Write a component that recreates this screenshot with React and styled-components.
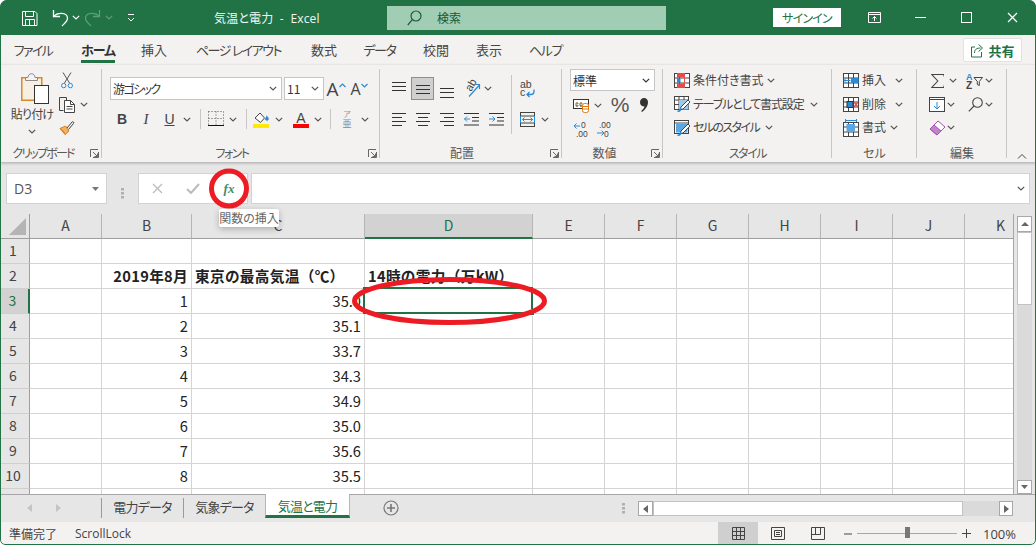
import React from "react";
import styled, { createGlobalStyle } from "styled-components";

const G = "#217346";
const INK = "#444";
const BLUE = "#2B8AD3";
const UI = `"Open Sans","Noto Sans CJK JP",sans-serif`;
const CJK = `"Noto Sans CJK JP","Noto Sans",sans-serif`;

const Global = createGlobalStyle`
  html, body { margin: 0; padding: 0; background: #fff; }
  #root { width: 1036px; height: 545px; }
  * { box-sizing: border-box; }
`;

const Window = styled.div`
  position: relative; width: 1036px; height: 545px; overflow: hidden;
  display: flex; flex-direction: column;
  background: #f3f2f1; font-family: ${UI}; font-feature-settings: "palt";
  color: ${INK}; font-size: 12px;
  border-radius: 7px 7px 5px 5px;
  &::after {
    content: ""; position: absolute; inset: 0; pointer-events: none; z-index: 9;
    border: 1px solid ${G}; border-radius: 7px 7px 5px 5px;
  }
`;

/* ---------- title bar ---------- */
const TitleBar = styled.div`
  flex: none; height: 35px; display: flex; align-items: center; background: ${G}; color: #fff;
`;
const Qat = styled.div`width: 214px; display: flex; align-items: center; padding-left: 22px;`;
const Tool = styled.div`
  flex: none; width: ${p => p.$w}px; height: ${p => p.$h || 24}px;
  display: flex; align-items: center; justify-content: center;
  svg { flex: none; }
`;
const DocTitle = styled.div`width: 173px; font-size: 12px; color: #f2f7f4; white-space: pre; letter-spacing: .15px;`;
const Search = styled.div`
  width: 279px; height: 24px; background: #a0cdb4; color: #155a36; font-size: 12px;
  display: flex; align-items: center; gap: 15px; padding-left: 20px;
`;
const SignIn = styled.div`
  margin-left: 107px; width: 68px; height: 19px; background: #fff; color: ${G};
  font-size: 12px; letter-spacing: -.8px; display: flex; align-items: center; justify-content: center;
`;
const WinButtons = styled.div`margin-left: 10px; display: flex;`;

/* ---------- tabs ---------- */
const TabRow = styled.div`flex: none; height: 30px; display: flex; padding-left: 4px; background: #f3f2f1;`;
const Tab = styled.div`
  flex: none; width: ${p => p.$w}px; display: flex; justify-content: center; font-size: 13px; color: #484644;
  padding-top: 6px;
`;
const TabLabel = styled.span`
  height: 22px; line-height: 18px; font-weight: ${p => p.$active ? 700 : 400};
  border-bottom: 3px solid ${p => p.$active ? G : "transparent"}; color: ${p => p.$active ? "#333" : "inherit"};
  letter-spacing: ${p => p.$ls || 0}px; white-space: pre;
`;
const Share = styled.div`
  margin: 3px 14px 0 auto; width: 59px; height: 24px; background: #fff; border: 1px solid #e3e2e1; border-radius: 2px;
  color: ${G}; font-weight: 700; font-size: 13px; display: flex; align-items: center; justify-content: center; gap: 3px;
`;

/* ---------- ribbon ---------- */
const Ribbon = styled.div`
  flex: none; height: 97px; display: flex; padding-top: 4px; background: #f3f2f1; position: relative; z-index: 2;
  box-shadow: 0 1px 3px rgba(0,0,0,.28);
`;
const Group = styled.div`
  flex: none; width: ${p => p.$w}px; height: 93px; position: relative; display: flex; flex-direction: column;
  &::after { content: ""; position: absolute; right: 0; top: 0; bottom: 4px; width: 1px; background: #c8c6c4; }
`;
const Body = styled.div`
  height: 77px; display: flex; padding-left: ${p => p.$pad || 0}px;
  flex-direction: ${p => p.$col ? "column" : "row"};
`;
const GroupLabel = styled.div`
  height: 16px; position: relative; text-align: center; font-size: 12px; line-height: 16px; color: #5a5856; white-space: nowrap;
  padding-right: ${p => p.$shift || 0}px; letter-spacing: ${p => p.$ls || 0}px;
`;
const Launcher = styled.span`position: absolute; right: 3px; top: 3px; display: flex;`;
const Row = styled.div`
  display: flex; align-items: center; height: ${p => p.$h}px; margin-top: ${p => p.$mt || 0}px; flex: none;
`;
const PasteCol = styled.div`
  flex: none; width: 54px; margin-left: 5px; padding-top: 3px; display: flex; flex-direction: column; align-items: center;
  font-size: 12px; color: #444;
`;
const PasteIcon = styled.div`align-self: flex-start; margin-left: 16px; height: 32px;`;
const PasteText = styled.div`height: 18px; line-height: 18px; margin-top: 2px; white-space: nowrap; letter-spacing: -.8px;`;
const ClipTools = styled.div`display: flex; flex-direction: column; padding-top: 3px; gap: 8px;`;
const SelectBox = styled.div`
  flex: none; width: ${p => p.$w}px; height: ${p => p.$h || 23}px; background: #fff; border: 1px solid #c6c6c6; margin-left: ${p => p.$ml || 0}px;
  display: flex; align-items: center; justify-content: space-between; padding: 0 4px 0 2px;
  font-size: 12px; color: #333; font-family: ${CJK};
`;
const FontFace = styled.span`letter-spacing: -1.6px;`;
const ActiveTool = styled(Tool)`background: #cfcfcf; border: 1px solid #8e8e8e; height: 23px;`;
const VSep = styled.div`width: 1px; height: ${p => p.$h}px; background: #c8c6c4; flex: none;`;
const AlignLeft = styled.div`flex: none; width: 131px; padding: 8px 0 0 7px;`;
const AlignRight = styled.div`flex: none; padding: 8px 0 0 7px;`;
const SepWrap = styled.div`flex: none; padding-top: 6px;`;
const ListText = styled.span`
  white-space: nowrap; color: #444; letter-spacing: ${p => p.$ls || 0}px; width: ${p => p.$w}px;
  margin: -1px 0 0 3px; font-size: 12px;
`;
const Spacer = styled.div`flex: none; width: ${p => p.$w}px;`;
const Collapse = styled.div`position: absolute; left: 1017px; top: 88px; display: flex;`;

/* ---------- formula bar ---------- */
const FormulaBar = styled.div`
  flex: none; height: 52px; background: #e6e6e6; padding: 11px 6px 0; display: flex;
`;
const NameBox = styled.div`
  width: 101px; height: 31px; background: #fff; border: 1px solid #d2d2d2; display: flex; align-items: center; justify-content: space-between;
  padding: 0 7px; font-size: 14px; color: #555;
`;
const Grip = styled.div`width: 31px; display: flex; align-items: center; justify-content: center;`;
const FxBox = styled.div`
  width: 110px; height: 31px; background: #fff; border: 1px solid #d2d2d2; display: flex; align-items: center;
`;
const FxText = styled.span`
  font-family: "Liberation Serif", serif; font-style: italic; font-weight: 700; font-size: 13px; color: #3d8f63;
`;
const Input = styled.div`
  margin-left: 3px; width: 779px; height: 31px; background: #fff; border: 1px solid #d2d2d2;
  display: flex; align-items: center; justify-content: flex-end; padding-right: 4px;
`;

/* ---------- sheet ---------- */
const Main = styled.div`flex: none; height: 280px; display: flex; background: #e6e6e6;`;
const Sheet = styled.div`
  flex: none; width: 1014px; height: 280px; overflow: hidden; background: #fff; border-right: 1px solid #a6a6a6; position: relative;
  display: grid; grid-template-columns: 30px 72px 90px 173px 168px repeat(7, 72px); grid-auto-rows: 25px;
  font-family: ${CJK}; font-feature-settings: normal;
`;
const Corner = styled.div`
  background: #e6e6e6; border-right: 1px solid #9e9e9e; border-bottom: 1px solid #9e9e9e; position: relative;
  display: flex; align-items: flex-end; justify-content: flex-end; padding: 0 3px 3px 0;
`;
const ColHead = styled.div`
  background: ${p => p.$on ? "#d2d2d2" : "#e6e6e6"}; color: ${p => p.$on ? G : "#444"};
  border-right: 1px solid #b5b5b5;
  border-bottom: ${p => p.$on ? `2px solid ${G}` : "1px solid #9e9e9e"};
  text-align: center; font-size: 14px; line-height: 23px;
`;
const RowHead = styled.div`
  background: ${p => p.$on ? "#d2d2d2" : "#e6e6e6"}; color: ${p => p.$on ? G : "#444"};
  border-right: ${p => p.$on ? `2px solid ${G}` : "1px solid #9e9e9e"};
  border-bottom: 1px solid #cfcfcf;
  text-align: center; font-size: 14px; line-height: 23px; padding-right: 3px;
`;
const Cell = styled.div`
  border-right: 1px solid #d4d4d4; border-bottom: 1px solid #d4d4d4; background: #fff; position: relative;
  font-size: 14.67px; line-height: 24px; color: #222; white-space: nowrap;
  font-weight: ${p => p.$bold ? 700 : 400}; text-align: ${p => p.$right ? "right" : "left"};
  letter-spacing: ${p => p.$bold ? .3 : 0}px;
  padding: 0 3px 0 3px;
  ${p => p.$sel && `
    z-index: 1;
    &::after { content: ""; position: absolute; top: -2px; left: -2px; right: -1px; bottom: -1px; border: 2px solid ${G}; }
    &::before { content: ""; position: absolute; right: -3px; bottom: -3px; width: 5px; height: 5px; background: ${G}; border: 1px solid #fff; z-index: 2; }
  `}
`;
const VScroll = styled.div`
  flex: none; width: 22px; padding: 2px 4px 0 3px; display: flex; flex-direction: column;
`;
const ScrollBtn = styled.div`
  flex: none; width: ${p => p.$w || 15}px; height: ${p => p.$h || 16}px; background: #fff; border: 1px solid #a8a8a8;
  display: flex; align-items: center; justify-content: center;
`;
const VThumb = styled.div`flex: none; height: 73px; background: #fff; border: 1px solid #c2c2c2;`;
const VTrack = styled.div`flex: 1; background: #dadada;`;

/* ---------- sheet tabs ---------- */
const SheetBar = styled.div`
  flex: none; height: 28px; background: #e6e6e6; border-top: 1px solid #a6a6a6; display: flex; align-items: flex-start;
`;
const TabNav = styled.div`
  width: 102px; height: 20px; margin-top: 3px; display: flex; align-items: center; padding-left: 27px; gap: 24px;
  border-right: 1px solid #9a9a9a;
`;
const SheetTab = styled.div`
  flex: none; width: ${p => p.$w}px; text-align: center; font-size: 13px; white-space: nowrap; letter-spacing: -.8px;
  ${p => p.$active ? `
    background: #fff; color: ${G}; border-bottom: 3px solid ${G}; height: 24px; margin-top: -1px; line-height: 25px;
    border-left: 1px solid #b5b5b5; border-right: 1px solid #b5b5b5;
  ` : `color: #444; margin-top: 3px; height: 20px; line-height: 18px;`}
  ${p => p.$sep && `border-right: 1px solid #9a9a9a;`}
`;
const AddSheet = styled.div`margin: 5px 0 0 33px; width: 20px; display: flex;`;
const HGrip = styled.div`margin: 8px 0 0 ${p => p.$ml}px; width: 10px; display: flex;`;
const HScroll = styled.div`margin: 6px 0 0 6px; display: flex; width: 375px; height: 15px;`;
const HThumb = styled.div`width: 310px; background: #fff; border: 1px solid #c2c2c2;`;
const HTrack = styled.div`flex: 1; background: #dadada;`;

/* ---------- status bar ---------- */
const StatusBar = styled.div`
  flex: none; height: 23px; background: #f3f2f1; display: flex; align-items: center; font-size: 12px; color: #444;
  padding-left: 9px;
`;
const StatusText = styled.span`width: ${p => p.$w}px; flex: none; white-space: nowrap;`;
const ViewBtn = styled.div`
  flex: none; width: 40px; height: 23px; background: ${p => p.$on ? "#cfcfcf" : "transparent"};
  display: flex; align-items: center; justify-content: center;
`;
const Zoom = styled.div`margin-left: 6px; display: flex; align-items: center;`;
const ZoomTrack = styled.div`
  width: 100px; height: 1px; background: #a6a6a6; position: relative; margin: 0 5px;
  &::after { content: ""; position: absolute; left: 48px; top: -6px; width: 5px; height: 11px; background: #777; }
`;
const ZoomPct = styled.span`margin-left: 12px; font-size: 13px;`;

/* ---------- overlays ---------- */
const Tip = styled.div`
  position: absolute; left: 219px; top: 209px; width: 60px; height: 18px; background: #fff; border-radius: 2px; z-index: 5;
  box-shadow: 0 2px 6px rgba(0,0,0,.25); font-size: 12px; color: #666; line-height: 17px; text-align: center; white-space: nowrap;
  font-family: ${CJK};
`;
const Mark = styled.svg`position: absolute; left: 0; top: 0; z-index: 6; pointer-events: none;`;

/* ---------- icons ---------- */
const S = ({ w = 16, h = 16, c = INK, sw = 1, children }) => (
  <svg width={w} height={h} viewBox={`0 0 ${w} ${h}`} fill="none" stroke={c} strokeWidth={sw}>{children}</svg>
);
const Chev = ({ c = "#555" }) => (
  <svg width="8" height="5" viewBox="0 0 8 5" fill="none" stroke={c} strokeWidth="1.2"><path d="M.8.8 4 4 7.2.8" /></svg>
);
const C = ({ w = 12, c }) => <Tool $w={w}><Chev c={c} /></Tool>;

const Save = () => (
  <S c="#fff"><path d="M.5 1.500h12.500l2 2v12H.5z" /><path d="M3.500 1.500v5h8v-5" /><path d="M3.500 15.500v-6h9v6M7.500 9.500v6" /></S>
);
const Undo = ({ c = "#fff", flip }) => (
  <svg width="17" height="18" viewBox="0 0 17 18" fill="none" stroke={c} strokeWidth="1.3" style={flip ? { transform: "scaleX(-1)" } : undefined}>
    <path d="M1.500 1v6.500H8" /><path d="M1.500 7.500C5 3.500 15 2.500 15.500 9c.2 3-2.500 5-5.500 8" />
  </svg>
);
const Customize = () => (
  <S w={8} h={9} c="#fff"><path d="M1 1.500h6M1 5l3 3 3-3" /></S>
);
const SearchIc = () => (
  <S w={15} h={16} c="#1d5c3b" sw={1.2}><circle cx="9" cy="6" r="5" /><path d="M5.300 9.700.8 15" /></S>
);
const RibbonDisp = () => (
  <S w={13} h={11} c="#fff"><path d="M.5.5h12v10H.5zM.5 2.500h12" /><path d="M6.500 9V4.500M4.500 6.500l2-2 2 2" /></S>
);
const ShareIc = () => (
  <S w={15} h={15} c={G}><path d="M5 4H1.500v10h10V9" /><path d="M4.500 10c0-3.500 2-5 6-5M8.500 1.500 12.500 5l-4 3.500" /></S>
);
const PasteIc = () => (
  <S w={28} h={32}>
    <rect x=".75" y="5.750" width="20" height="22.500" stroke="#d98a22" strokeWidth="1.5" fill="#f7efe4" />
    <path d="M4.500 5.500h2.500c0-5 7-5 7 0h2.500v3h-12z" stroke="#8a8a8a" fill="#f3f2f1" />
    <rect x="13.500" y="13.500" width="14" height="18" stroke="#333" fill="#fff" />
  </S>
);
const Cut = () => (
  <S w={12} h={17} c="#555">
    <path d="M2 .5 8.500 11M10 .5 3.500 11" />
    <circle cx="2.700" cy="13.600" r="2.200" stroke={BLUE} /><circle cx="9.300" cy="13.600" r="2.200" stroke={BLUE} />
  </S>
);
const Copy = () => (
  <S w={16} h={17}>
    <path d="M4.500 14.500h-4v-13h7v3" />
    <path d="M5.500 4.500h6l4 4v8h-10z" fill="#fff" /><path d="M11.500 4.500v4h4M7.500 10.500h6M7.500 13h6" />
  </S>
);
const Brush = () => (
  <S w={16} h={16}>
    <path d="M1 8.500 6 14.500 10 11 6.500 6z" fill="#f2b266" stroke="#d9801b" />
    <path d="M1 8.500c2 1 4 3 5 6" stroke="#d9801b" />
    <path d="m8 8 5-6c1-1 2.500.5 1.500 1.500L9.500 9.500" stroke="#444" />
  </S>
);
const GrowGlyph = styled.span`
  display: inline-flex; align-items: flex-start; font-size: ${p => p.$size}px; line-height: 20px; color: #444;
  font-family: "Open Sans", sans-serif;
`;
const GrowA = ({ up, size }) => (
  <GrowGlyph $size={size}>
    A
    <svg width="7" height="5" viewBox="0 0 7 5" fill="none" stroke={BLUE} strokeWidth="1.2" style={{ marginTop: 4 }}>
      <path d={up ? "M.5 4 3.500 1l3 3" : "M.5 1l3 3 3-3"} />
    </svg>
  </GrowGlyph>
);
const FontB = styled.span`font-weight: 700; font-size: 14px; color: #444; font-family: "Liberation Sans",sans-serif;`;
const FontI = styled.span`font-style: italic; font-size: 15px; color: #444; font-family: "Liberation Serif",serif;`;
const FontU = styled.span`text-decoration: underline; font-size: 14px; color: #444; font-family: "Liberation Sans",sans-serif;`;
const Borders = () => (
  <S w={16} h={16}>
    <path d="M.5 .5h15M.5 .5v14M15.500.5v14M8 .5v14M.5 7.500h15" strokeDasharray="1 2" stroke="#555" />
    <path d="M0 14.500h16" stroke="#111" strokeWidth="1.2" />
  </S>
);
const Fill = () => (
  <S w={17} h={17}>
    <path d="m2 7 5-5 4.500 5-4 4.500z" fill="#fff" /><path d="M13.500 5c1.500 1 2 2.500 1.500 4-1 .5-2.500 0-3-1" fill={BLUE} stroke={BLUE} />
    <rect x="0" y="13" width="16" height="4" fill="#ffea00" stroke="none" />
  </S>
);
const TextA = () => (
  <svg width="16" height="17" viewBox="0 0 16 17">
    <text x="8" y="12" textAnchor="middle" fontSize="14" fontFamily="Liberation Sans" fill="#444">A</text>
    <rect x="0" y="13" width="16" height="4" fill="#f00" />
  </svg>
);
const Phonetic = () => (
  <svg width="14" height="20" viewBox="0 0 14 20">
    <text x="7" y="8" textAnchor="middle" fontSize="8" fontFamily="Noto Sans CJK JP" fill="#999">ア</text>
    <text x="7" y="18" textAnchor="middle" fontSize="9" fontFamily="Noto Sans CJK JP" fill="#888">亜</text>
  </svg>
);
const VAlign = ({ ys }) => (
  <S w={14} h={18} c="#333">{ys.map(y => <path key={y} d={`M0 ${y + .5}h14`} />)}</S>
);
const HAlign = ({ l }) => (
  <S w={14} h={14} c="#333">
    {[1, 5, 9, 13].map((y, i) => {
      const w = i % 2 ? 10 : 14;
      const x = l === "l" ? 0 : l === "r" ? 14 - w : (14 - w) / 2;
      return <path key={y} d={`M${x} ${y + .5}h${w}`} />;
    })}
  </S>
);
const Orient = () => (
  <svg width="23" height="23" viewBox="-3 -3 23 23" fill="none">
    <text x="0" y="0" transform="translate(7 12) rotate(-60)" fontSize="11" fontFamily="Liberation Sans" fill="#444">ab</text>
    <path d="M5 16.500 15.500 5M11 4.500h4.500V9" stroke={BLUE} strokeWidth="1.2" />
  </svg>
);
const Indent = ({ inc }) => (
  <S w={15} h={14} c="#333">
    <path d="M0 1.500h15M8 5.500h7M8 9h7M0 13h15" />
    {inc
      ? <path d="M0 7h6M3.500 4.500 6 7 3.500 9.500" stroke={BLUE} />
      : <path d="M6 7H.5M3 4.500.5 7 3 9.500" stroke={BLUE} />}
  </S>
);
const Wrap = () => (
  <svg width="15" height="23" viewBox="0 -3 15 23" fill="none">
    <text x="0" y="8" fontSize="10.500" fontFamily="Liberation Sans" fill="#444">ab</text>
    <text x="0" y="16" fontSize="10.500" fontFamily="Liberation Sans" fill="#444">c</text>
    <path d="M14 9.500v2c0 2-1 3-3 3H7M9.500 12 7 14.500 9.500 17" stroke={BLUE} strokeWidth="1.3" />
  </svg>
);
const Merge = () => (
  <S w={15} h={15}>
    <rect x=".5" y=".5" width="14" height="14" />
    <path d="M.5 4h14M.5 11h14" />
    <path d="M2.500 7.500h10M4.500 5.500l-2 2 2 2M10.500 5.500l2 2-2 2" stroke={BLUE} />
    <path d="M.5 4v7M14.500 4v7" stroke={BLUE} />
  </S>
);
const Acct = () => (
  <svg width="16" height="15" viewBox="0 0 16 15" fill="none">
    <rect x=".5" y="1.500" width="15" height="9" stroke="#333" fill="#fff" />
    <text x="2" y="9" fontSize="7" fontFamily="Liberation Sans" fill="#333">¢¢</text>
    <rect x="9.500" y="5.500" width="6" height="9" rx="2" fill="#fff" stroke="#e07a10" />
    <path d="M9.500 8.500h6M9.500 11h6" stroke="#e07a10" />
  </svg>
);
const PctText = styled.span`font-size: 21px; font-weight: 400; color: #555; font-family: "Liberation Sans",sans-serif; line-height: 24px;`;
const Comma = () => (
  <svg width="8" height="14" viewBox="0 0 8 14"><path d="M4 0c2.500 0 4 1.700 4 4 0 4-2.500 7.500-6 10l-.8-1C3 11.500 4.200 10 4.500 8.300 2 8.800 0 6.800 0 4.200 0 1.800 1.800 0 4 0z" fill="#333" /></svg>
);
const Decimal = ({ inc }) => (
  <svg width="17" height="17" viewBox="0 0 17 17" fill="none">
    <text x={inc ? 8 : 3} y="7" fontSize="8.500" fontFamily="Liberation Sans" fill="#444">{inc ? "0" : ".00"}</text>
    <text x={inc ? 3 : 8} y="16" fontSize="8.500" fontFamily="Liberation Sans" fill="#444">{inc ? ".00" : "0"}</text>
    {inc
      ? <path d="M7 5H1M3.500 2.500 1 5l2.500 2.500" stroke={BLUE} />
      : <path d="M1 12h7M5.500 9.500 8 12l-2.500 2.500" stroke={BLUE} />}
  </svg>
);
const Tbl = ({ children }) => (
  <S w={16} h={15} c="#444">
    <rect x=".5" y=".5" width="15" height="14" fill="#fff" />
    <path d="M.5 5h15M.5 10h15M5.500.5v14M10.500.5v14" />
    {children}
  </S>
);
const CondFmt = () => (
  <Tbl>
    <rect x="4" y="1" width="6" height="3.500" fill="#e64a4a" stroke="none" />
    <rect x="4" y="5.500" width="2.500" height="4" fill={BLUE} stroke="none" />
    <rect x="4" y="10.500" width="6" height="3.500" fill="#e64a4a" stroke="none" />
    <rect x="3.500" y=".5" width="7" height="14" stroke="#e64a4a" fill="none" />
  </Tbl>
);
const TableFmt = () => (
  <S w={17} h={16}>
    <rect x=".5" y=".5" width="14" height="13" fill="#fff" />
    <path d="M.5 4h14M5 .5v13M10 .5v13M.5 8.500h14" />
    <rect x="5" y="4" width="9.500" height="9.500" fill="#9cc8ec" stroke="none" />
    <path d="m6 14 1-3 7-7 2 2-7 7z" fill="#fff" stroke="#444" />
    <path d="M3.500 15.500C5 15.500 6.500 14.500 7 12" stroke={BLUE} strokeWidth="1.5" />
  </S>
);
const StyleFmt = () => (
  <S w={17} h={16}>
    <rect x=".5" y=".5" width="14" height="13" fill="#fff" />
    <path d="M.5 3h14" />
    <rect x="2" y="4" width="11.500" height="8.500" fill="#5ba7e3" stroke="none" />
    <path d="m6 14 1-3 7-7 2 2-7 7z" fill="#fff" stroke="#444" />
    <path d="M3.500 15.500C5 15.500 6.500 14.500 7 12" stroke={BLUE} strokeWidth="1.5" />
  </S>
);
const InsertIc = () => (
  <Tbl>
    <rect x="8" y="5" width="7.500" height="5" fill={BLUE} stroke="none" />
    <path d="M7.500 7.500H1M3.500 5 1 7.500 3.500 10" stroke={BLUE} fill="none" />
  </Tbl>
);
const DeleteIc = () => (
  <Tbl>
    <rect x="4" y="4.500" width="6" height="6" fill={BLUE} stroke="#333" />
    <path d="m11 5 4 5M15 5l-4 5" stroke="#e64a4a" strokeWidth="1.3" />
  </Tbl>
);
const FormatIc = () => (
  <S w={16} h={18}>
    <path d="M2.500 1.500h11M2.500 0v3M13.500 0v3" stroke={BLUE} />
    <rect x=".5" y="3.500" width="15" height="14" fill="#fff" />
    <path d="M.5 8h15M.5 13h15M5.500 3.500v14M10.500 3.500v14" />
    <rect x="3.500" y="5" width="8.500" height="8" fill="#5ba7e3" stroke="none" />
  </S>
);
const Sigma = () => (
  <S w={13} h={14} c="#444" sw={1.1}><path d="M13 2.500V.5H.8l6 6.500-6 6.500H13v-2" /></S>
);
const SortIc = () => (
  <svg width="18" height="17" viewBox="0 0 18 17" fill="none">
    <text x="0" y="7.500" fontSize="9" fontWeight="700" fontFamily="Liberation Sans" fill={BLUE}>A</text>
    <text x="0" y="16.500" fontSize="10" fontWeight="700" fontFamily="Liberation Sans" fill="#444">Z</text>
    <path d="M8 5.500h8.500l-3.200 4v4l-2-1v-3z" stroke="#444" />
  </svg>
);
const FillDown = () => (
  <S w={16} h={15}>
    <rect x=".5" y=".5" width="15" height="14" fill="#fff" />
    <path d="M.5 2.500h15" />
    <path d="M8 5v7M5 9l3 3 3-3" stroke={BLUE} />
  </S>
);
const Find = () => (
  <S w={15} h={15} c="#444" sw={1.1}><circle cx="9.500" cy="5.500" r="4.800" /><path d="M6 9 .8 14.300" /></S>
);
const Eraser = () => (
  <S w={17} h={16}>
    <path d="M1 9 9 1l7 6-8 8z" fill="#fff" stroke="#a64fb5" />
    <path d="M1 9l4-4 7 6-4 4z" fill="#c283cd" stroke="#a64fb5" />
  </S>
);
const LaunchIc = () => (
  <S w={9} h={9} c="#666"><path d="M.5 8V.5H8M8.500 3v5.500H3M3 3l4.500 4.500M7.500 4.500v3h-3" /></S>
);
const X = ({ c = "#bbb", s = 11 }) => (
  <S w={s} h={s} c={c} sw={1.3}><path d={`M1 1 ${s - 1} ${s - 1}M${s - 1} 1 1 ${s - 1}`} /></S>
);
const Check = () => (
  <S w={14} h={11} c="#bbb" sw={2}><path d="M1 6l4 4 8-9" /></S>
);
const TriDown = ({ c = "#777" }) => (
  <svg width="7" height="4" viewBox="0 0 7 4"><path d="M0 0h7L3.500 4z" fill={c} /></svg>
);
const Tri = ({ left, c = "#777" }) => (
  <svg width="5" height="8" viewBox="0 0 5 8"><path d={left ? "M5 0v8L0 4z" : "M0 0v8l5-4z"} fill={c} /></svg>
);
const Dots = () => (
  <S w={3} h={11} c="none"><rect width="3" height="2.500" fill="#b0b0b0" /><rect y="4" width="3" height="2.500" fill="#b0b0b0" /><rect y="8" width="3" height="2.500" fill="#b0b0b0" /></S>
);
const PlusCircle = () => (
  <S w={16} h={16} c="#777" sw={1.2}><circle cx="8" cy="8" r="7" /><path d="M8 4v8M4 8h8" strokeWidth="1.6" /></S>
);
const ViewNormal = () => (
  <S w={13} h={13} c="#444"><path d="M.5.5h12v12H.5zM4.500.5v12M8.500.5v12M.5 4.500h12M.5 8.500h12" /></S>
);
const ViewLayout = () => (
  <S w={14} h={13} c="#444"><path d="M.5.5h13v12H.5zM3.500 3.500h7v6h-7zM5 5.500h4M5 7.500h4" /></S>
);
const ViewBreak = () => (
  <S w={14} h={13} c="#444"><path d="M.5.5h13v12H.5zM.5 7.500h9V.5M4.500 .5v7" /></S>
);

const Launcher2 = () => <Launcher><LaunchIc /></Launcher>;
const ListRow = ({ h, icon, text, w, tail, ls }) => (
  <Row $h={h}>
    <Tool $w={16}>{icon}</Tool>
    <ListText $w={w} $ls={ls}>{text}</ListText>
    <C w={tail} />
  </Row>
);

const COLS = ["A", "B", "C", "D", "E", "F", "G", "H", "I", "J", "K"];
const DATA = [
  [1, "35.0"], [2, "35.1"], [3, "33.7"], [4, "34.3"], [5, "34.9"], [6, "35.0"], [7, "35.6"], [8, "35.5"],
];
const blanks = (r, from) => COLS.slice(from).map(c => <Cell key={r + c} />);

export default function App() {
  return (
    <Window>
      <Global />
      <TitleBar>
        <Qat>
          <Save />
          <Spacer $w={14} /><Undo />
          <Tool $w={14}><Chev c="#fff" /></Tool>
          <Spacer $w={1} /><Undo c="#5f9c7c" flip />
          <Tool $w={15}><Chev c="#5f9c7c" /></Tool>
          <Tool $w={30}><Customize /></Tool>
        </Qat>
        <DocTitle>気温と電力  -  Excel</DocTitle>
        <Search><SearchIc /><span>検索</span></Search>
        <SignIn>サインイン</SignIn>
        <WinButtons>
          <Tool $w={46}><RibbonDisp /></Tool>
          <Tool $w={46}><S w={11} h={2} c="#fff"><path d="M0 .5h11" /></S></Tool>
          <Tool $w={46}><S w={11} h={11} c="#fff"><rect x=".5" y=".5" width="10" height="10" /></S></Tool>
          <Tool $w={46}><X c="#fff" /></Tool>
        </WinButtons>
      </TitleBar>

      <TabRow>
        <Tab $w={58}><TabLabel $ls={-1.6}>ファイル</TabLabel></Tab>
        <Tab $w={72}><TabLabel $active $ls={-1}>ホーム</TabLabel></Tab>
        <Tab $w={40}><TabLabel>挿入</TabLabel></Tab>
        <Tab $w={129}><TabLabel $ls={-1.5}>ページ レイアウト</TabLabel></Tab>
        <Tab $w={42}><TabLabel>数式</TabLabel></Tab>
        <Tab $w={69}><TabLabel $ls={-1.3}>データ</TabLabel></Tab>
        <Tab $w={44}><TabLabel>校閲</TabLabel></Tab>
        <Tab $w={62}><TabLabel>表示</TabLabel></Tab>
        <Tab $w={51}><TabLabel $ls={-1.3}>ヘルプ</TabLabel></Tab>
        <Share><ShareIc /><span>共有</span></Share>
      </TabRow>

      <Ribbon>
        <Group $w={102}>
          <Body>
            <PasteCol>
              <PasteIcon><PasteIc /></PasteIcon>
              <PasteText>貼り付け</PasteText>
              <Tool $w={12} $h={14}><Chev /></Tool>
            </PasteCol>
            <ClipTools>
              <Tool $w={16} $h={16}><Cut /></Tool>
              <Row $h={16}><Tool $w={16} $h={16}><Copy /></Tool><C w={18} /></Row>
              <Tool $w={16} $h={16}><Brush /></Tool>
            </ClipTools>
          </Body>
          <GroupLabel $shift={16} $ls={-1.8}>クリップボード<Launcher2 /></GroupLabel>
        </Group>

        <Group $w={278}>
          <Body $col $pad={8}>
            <Row $h={23} $mt={8}>
              <SelectBox $w={172}><FontFace>游ゴシック</FontFace><Chev /></SelectBox>
              <SelectBox $w={40} $ml={2}>11<Chev /></SelectBox>
              <Tool $w={24}><GrowA up size={19} /></Tool>
              <Tool $w={22}><GrowA size={16} /></Tool>
            </Row>
            <Row $h={24} $mt={7}>
              <Tool $w={24}><FontB>B</FontB></Tool>
              <Tool $w={24}><FontI>I</FontI></Tool>
              <Tool $w={23}><FontU>U</FontU></Tool>
              <C w={12} />
              <Tool $w={14}><VSep $h={20} /></Tool>
              <Tool $w={18}><Borders /></Tool>
              <C w={16} />
              <Tool $w={10}><VSep $h={20} /></Tool>
              <Tool $w={20}><Fill /></Tool>
              <C w={16} />
              <Tool $w={28}><TextA /></Tool>
              <C w={6} />
              <Tool $w={19}><VSep $h={20} /></Tool>
              <Tool $w={14}><Phonetic /></Tool>
              <C w={21} />
            </Row>
          </Body>
          <GroupLabel $shift={18} $ls={-1.5}>フォント<Launcher2 /></GroupLabel>
        </Group>

        <Group $w={182}>
          <Body>
            <AlignLeft>
              <Row $h={23}>
                <Tool $w={24}><VAlign ys={[2, 6, 10]} /></Tool>
                <ActiveTool $w={23}><VAlign ys={[5, 9, 13]} /></ActiveTool>
                <Spacer $w={1} />
                <Tool $w={24}><VAlign ys={[8, 12, 17]} /></Tool>
                <Tool $w={26}><Orient /></Tool>
                <C w={6} />
              </Row>
              <Row $h={24} $mt={7}>
                <Tool $w={24}><HAlign l="l" /></Tool>
                <Tool $w={24}><HAlign l="c" /></Tool>
                <Tool $w={24}><HAlign l="r" /></Tool>
                <Tool $w={25}><Indent /></Tool>
                <Tool $w={24}><Indent inc /></Tool>
              </Row>
            </AlignLeft>
            <SepWrap><VSep $h={59} /></SepWrap>
            <AlignRight>
              <Row $h={23}><Tool $w={16}><Wrap /></Tool></Row>
              <Row $h={24} $mt={7}><Tool $w={16}><Merge /></Tool><C w={20} /></Row>
            </AlignRight>
          </Body>
          <GroupLabel $shift={18}>配置<Launcher2 /></GroupLabel>
        </Group>

        <Group $w={101}>
          <Body $col $pad={8}>
            <SelectBox $w={85} $h={22}>標準<Chev c="#333" /></SelectBox>
            <Row $h={24} $mt={2}>
              <Tool $w={22}><Acct /></Tool>
              <C w={12} />
              <Tool $w={32}><PctText>%</PctText></Tool>
              <Tool $w={16}><Comma /></Tool>
            </Row>
            <Row $h={24}>
              <Tool $w={22}><Decimal inc /></Tool>
              <Tool $w={24}><Decimal /></Tool>
            </Row>
          </Body>
          <GroupLabel $shift={16}>数値<Launcher2 /></GroupLabel>
        </Group>

        <Group $w={169}>
          <Body $col $pad={11}>
            <ListRow h={23} icon={<CondFmt />} text="条件付き書式" w={70} tail={16} />
            <ListRow h={24} icon={<TableFmt />} text="テーブルとして書式設定" w={113} tail={16} ls={-1.15} />
            <ListRow h={23} icon={<StyleFmt />} text="セルのスタイル" w={68} tail={16} ls={-1.6} />
          </Body>
          <GroupLabel $ls={-1.4}>スタイル</GroupLabel>
        </Group>

        <Group $w={85}>
          <Body $col $pad={11}>
            <ListRow h={23} icon={<InsertIc />} text="挿入" w={24} tail={26} />
            <ListRow h={24} icon={<DeleteIc />} text="削除" w={24} tail={26} />
            <ListRow h={23} icon={<FormatIc />} text="書式" w={24} tail={16} />
          </Body>
          <GroupLabel>セル</GroupLabel>
        </Group>

        <Group $w={90}>
          <Body $col $pad={10}>
            <Row $h={23}>
              <Tool $w={20}><Sigma /></Tool><C w={12} /><Spacer $w={5} />
              <Tool $w={22}><SortIc /></Tool><C w={6} />
            </Row>
            <Row $h={24}>
              <Tool $w={20}><FillDown /></Tool><C w={8} /><Spacer $w={9} />
              <Tool $w={22}><Find /></Tool><C w={6} />
            </Row>
            <Row $h={23}>
              <Tool $w={20}><Eraser /></Tool><C w={8} />
            </Row>
          </Body>
          <GroupLabel>編集</GroupLabel>
        </Group>
        <Collapse>
          <S w={10} h={6} c="#444"><path d="M1 5.500 5 1.500l4 4" /></S>
        </Collapse>
      </Ribbon>

      <FormulaBar>
        <NameBox>D3<TriDown /></NameBox>
        <Grip><Dots /></Grip>
        <FxBox>
          <Tool $w={36}><X /></Tool>
          <Tool $w={36}><Check /></Tool>
          <Tool $w={36}><FxText>fx</FxText></Tool>
        </FxBox>
        <Input><Chev /></Input>
      </FormulaBar>

      <Main>
        <Sheet>
          <Corner>
            <svg width="17" height="17" viewBox="0 0 17 17"><path d="M17 0v17H0z" fill="#b4b4b4" /></svg>
          </Corner>
          {COLS.map(c => <ColHead key={c} $on={c === "D"}>{c}</ColHead>)}

          <RowHead>1</RowHead>
          {blanks(1, 0)}

          <RowHead>2</RowHead>
          <Cell />
          <Cell $bold $right>2019年8月</Cell>
          <Cell $bold>東京の最高気温（℃）</Cell>
          <Cell $bold>14時の電力（万kW）</Cell>
          {blanks(2, 4)}

          {DATA.map(([n, t], i) => (
            <React.Fragment key={n}>
              <RowHead $on={i === 0}>{i + 3}</RowHead>
              <Cell />
              <Cell $right>{n}</Cell>
              <Cell $right>{t}</Cell>
              <Cell $sel={i === 0} />
              {blanks(i + 3, 4)}
            </React.Fragment>
          ))}

          <RowHead />
          {blanks(11, 0)}
        </Sheet>
        <VScroll>
          <ScrollBtn><svg width="8" height="4" viewBox="0 0 8 4"><path d="M0 4h8L4 0z" fill="#666" /></svg></ScrollBtn>
          <VThumb />
          <VTrack />
          <ScrollBtn $h={14}><TriDown c="#666" /></ScrollBtn>
        </VScroll>
      </Main>

      <SheetBar>
        <TabNav><Tri left c="#c4c4c4" /><Tri c="#c4c4c4" /></TabNav>
        <SheetTab $w={82} $sep>電力データ</SheetTab>
        <SheetTab $w={81}>気象データ</SheetTab>
        <SheetTab $w={85} $active>気温と電力</SheetTab>
        <AddSheet><PlusCircle /></AddSheet>
        <HGrip $ml={219}><Dots /></HGrip>
        <HScroll>
          <ScrollBtn $h={15}><Tri left c="#666" /></ScrollBtn>
          <HThumb />
          <HTrack />
          <ScrollBtn $w={14} $h={15}><Tri c="#666" /></ScrollBtn>
        </HScroll>
      </SheetBar>

      <StatusBar>
        <StatusText $w={66}>準備完了</StatusText>
        <StatusText $w={643}>ScrollLock</StatusText>
        <ViewBtn $on><ViewNormal /></ViewBtn>
        <ViewBtn><ViewLayout /></ViewBtn>
        <ViewBtn><ViewBreak /></ViewBtn>
        <Zoom>
          <S w={8} h={2} c="#444"><path d="M0 1h8" /></S>
          <ZoomTrack />
          <S w={9} h={9} c="#444"><path d="M0 4.500h9M4.500 0v9" /></S>
          <ZoomPct>100%</ZoomPct>
        </Zoom>
      </StatusBar>

      <Tip>関数の挿入</Tip>
      <Mark width="1036" height="545" viewBox="0 0 1036 545" fill="none" stroke="#ed1c24">
        <circle cx="229" cy="188.500" r="17.500" strokeWidth="5" />
        <ellipse cx="449.500" cy="301" rx="95" ry="21.500" strokeWidth="5" />
      </Mark>
    </Window>
  );
}
